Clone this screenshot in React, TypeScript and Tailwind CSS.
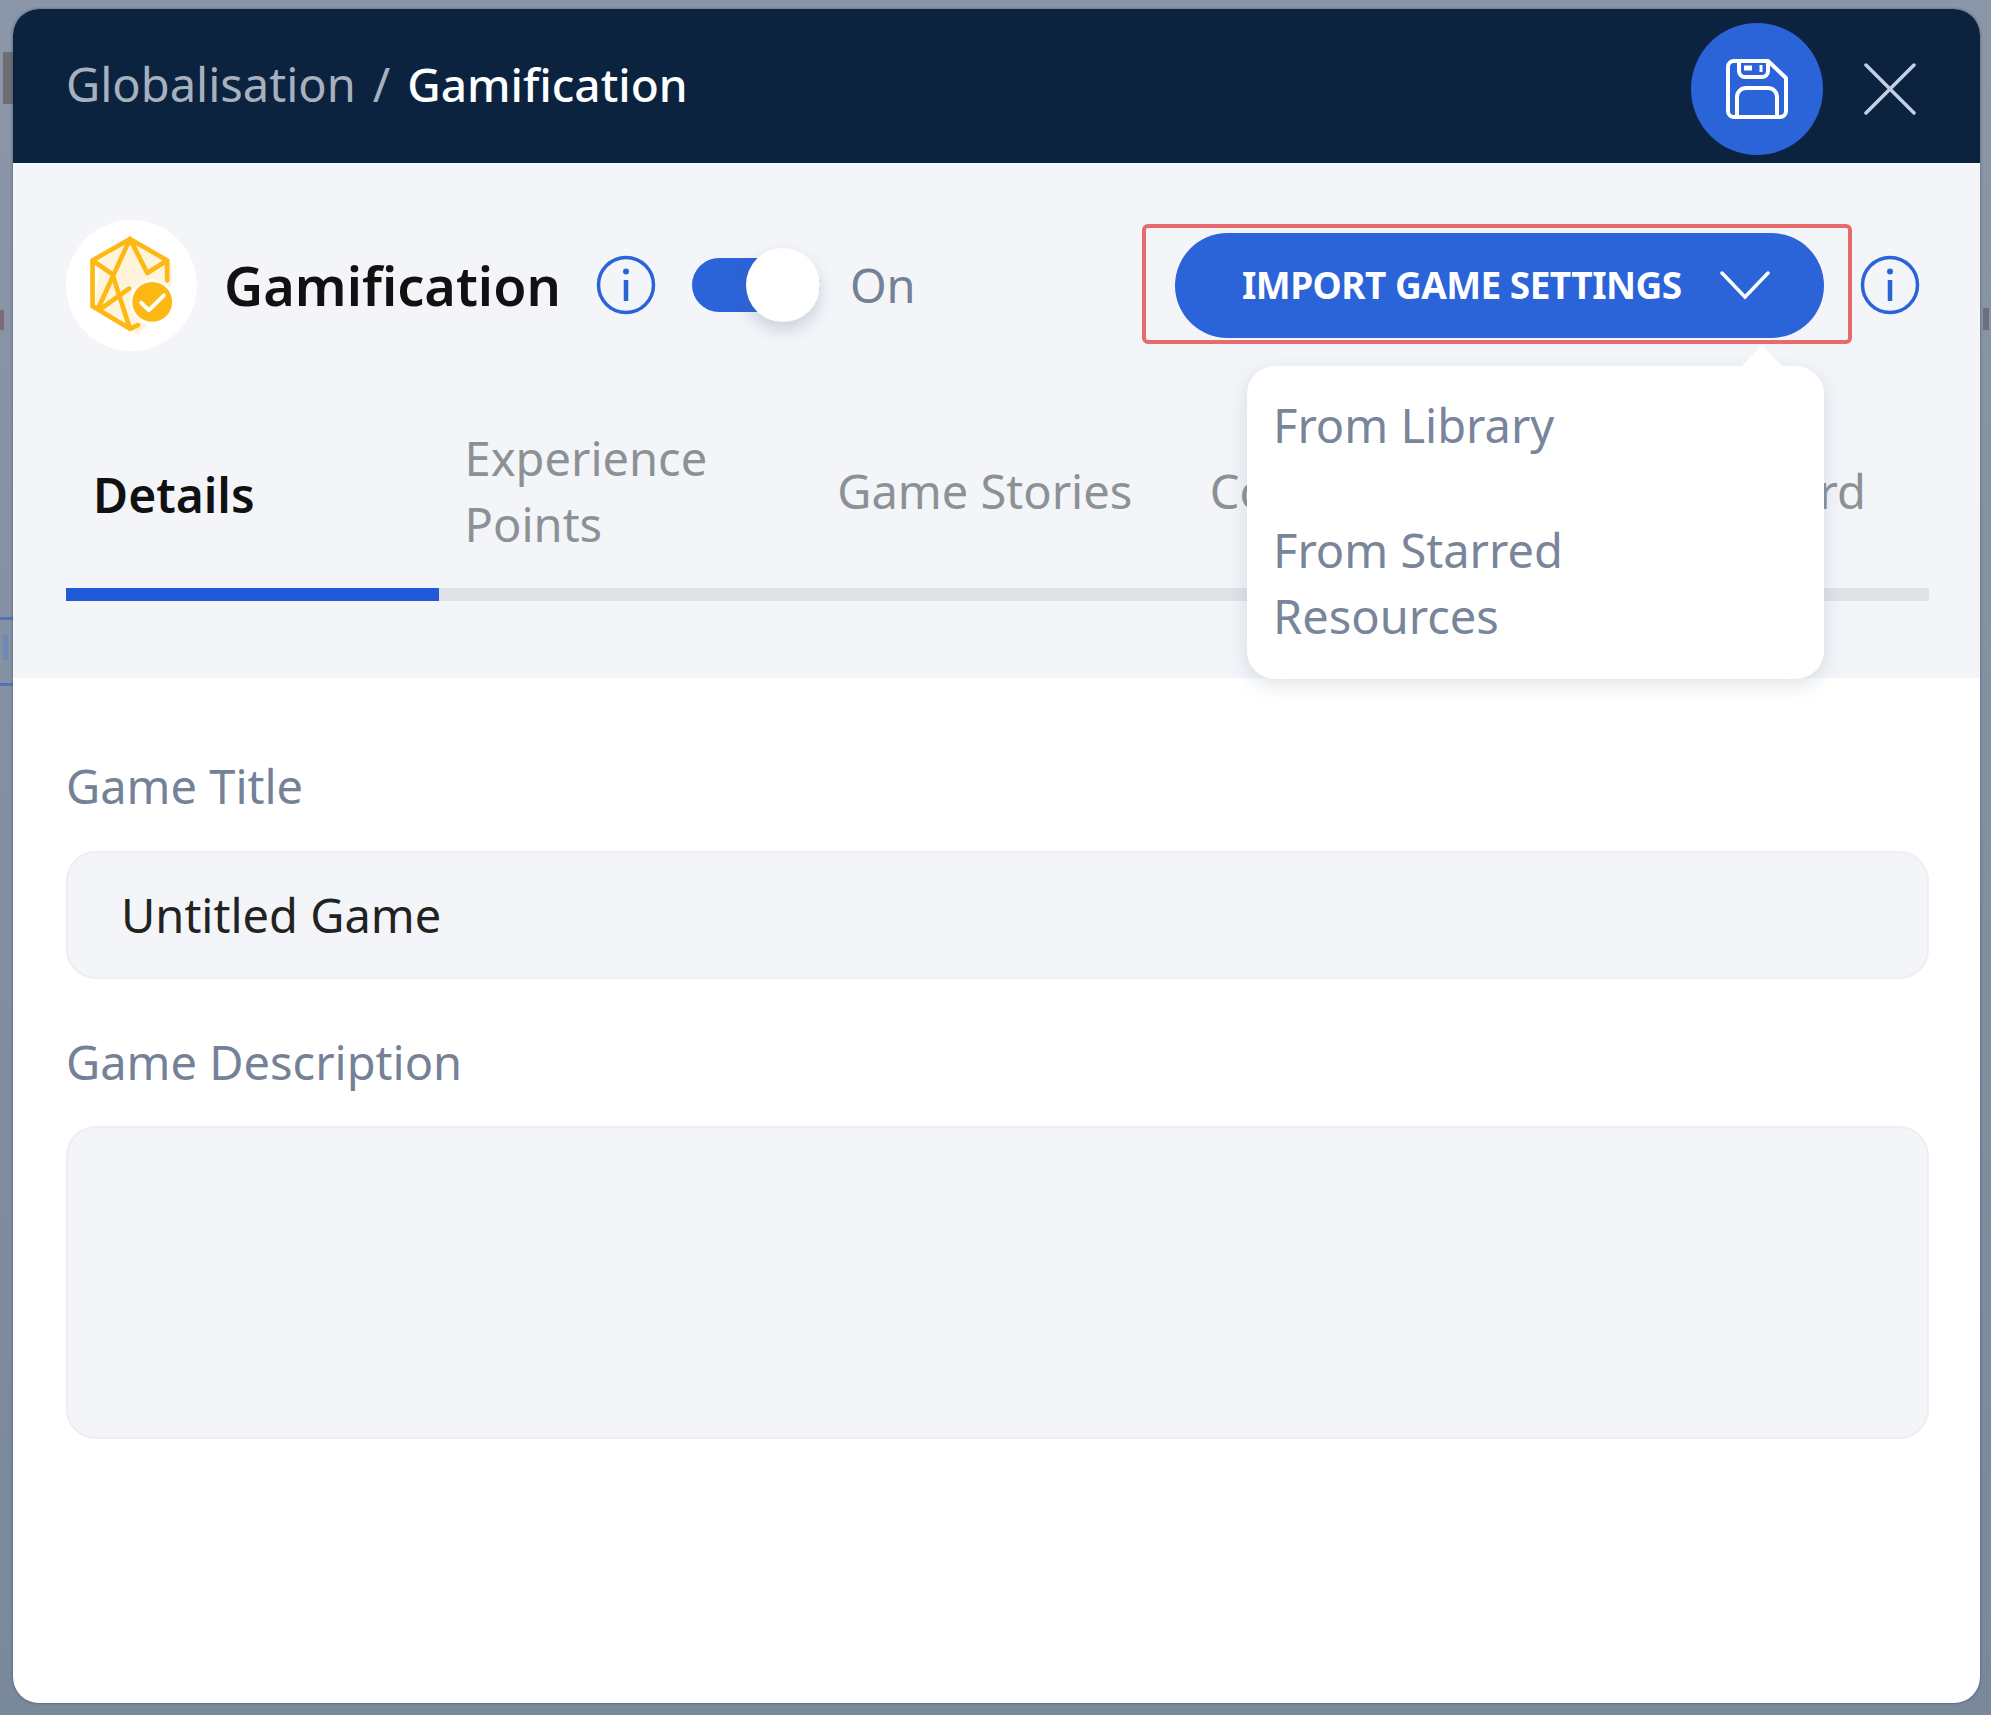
import React from "react";

const Info = () => (
  <svg width="60" height="60" viewBox="0 0 60 60" fill="none" className="shrink-0">
    <circle cx="30" cy="30" r="27.5" stroke="#2b63d9" strokeWidth="3.5" />
    <circle cx="30" cy="16.5" r="3" fill="#2b63d9" />
    <path d="M30 25v21" stroke="#2b63d9" strokeWidth="4.5" />
  </svg>
);

const Logo = () => (
  <svg width="131" height="131" viewBox="45 58 395 395" fill="none">
    <path d="M238 118 L365 190 L365 245 L340 300 L300 360 L262 405 L130 320 L150 180 Z" fill="#fff3dc" />
    <path
      d="M262 375 L238 386 L125 318 V180 L238 115 L350 180 V240 M125 180 L185 222 L238 386 M238 115 L145 318 M238 115 L290 218 L350 180 M155 322 L235 265"
      stroke="#fdb813"
      strokeWidth="14"
      strokeLinejoin="round"
      strokeLinecap="round"
    />
    <circle cx="305" cy="305" r="68" fill="#fff" />
    <circle cx="305" cy="305" r="60" fill="#fdb813" />
    <path d="M272 308 L295 330 L340 285" stroke="#fff" strokeWidth="12" strokeLinecap="round" strokeLinejoin="round" />
  </svg>
);

const Tab = ({ label, active }: { label: string; active?: boolean }) => (
  <div
    className={
      active
        ? "w-1/5 h-[200px] -mb-[13px] pl-[27px] flex items-center border-b-[13px] border-[#2159d8] text-[48px] font-semibold text-[#111111]"
        : "w-1/5 h-[187px] pb-[8px] pl-[26px] flex items-center text-[#8c9196]"
    }
  >
    {label}
  </div>
);

export default function App() {
  return (
    <div className="relative w-[1991px] h-[1715px] overflow-hidden bg-gradient-to-b from-[#8b97a8] to-[#7a889b] pt-[9px] pl-[13px] text-[47px] leading-[66px] font-['Noto_Sans','Open_Sans',sans-serif]">
      <div className="absolute left-[3px] top-[52px] w-[10px] h-[52px] bg-[#6d6d72]" />
      <div className="absolute left-0 top-[310px] w-[4px] h-[20px] bg-[#7b6a78]" />
      <div className="absolute left-0 top-[575px] w-[13px] h-[1px] bg-[#7a90b8]" />
      <div className="absolute left-0 top-[617px] w-[13px] h-[3px] bg-[#4f72b8]" />
      <div className="absolute left-[3px] top-[635px] w-[5px] h-[25px] bg-[#6f88b5]" />
      <div className="absolute left-0 top-[683px] w-[13px] h-[3px] bg-[#4f72b8]" />
      <div className="absolute left-0 top-[729px] w-[13px] h-[1px] bg-[#7a90b8]" />
      <div className="absolute right-[2px] top-[308px] w-[6px] h-[22px] bg-[#6a717c]" />

      <div className="relative flex flex-col w-[1967px] h-[1694px] rounded-[26px] overflow-hidden bg-white shadow-[0_0_3px_rgba(60,75,100,0.8)]">
        <header className="flex items-center h-[154px] shrink-0 bg-[#0c2340] pl-[53px] pr-[64px]">
          <span className="text-[#a6b1bd] mb-[5px]">Globalisation</span>
          <span className="text-[#a6b1bd] ml-[17px] mr-[17px] mb-[5px]">/</span>
          <span className="text-white text-[46px] font-medium mb-[5px]">Gamification</span>
          <button className="ml-auto mt-[5px] flex items-center justify-center w-[132px] h-[132px] rounded-full bg-[#2b63d9]">
            <svg width="62" height="60" viewBox="0 0 62 60" fill="none" stroke="#fff" strokeWidth="4" strokeLinejoin="round">
              <path d="M2 8a6 6 0 0 1 6-6h34l18 17v33a6 6 0 0 1-6 6H8a6 6 0 0 1-6-6V8z" />
              <path d="M13 2v10a6 6 0 0 0 6 6h17a6 6 0 0 0 6-6V2" />
              <path d="M18 9h8" strokeWidth="5" />
              <path d="M35 6v7" strokeWidth="3" />
              <path d="M11 58V38a9 9 0 0 1 9-9h22a9 9 0 0 1 9 9v20" />
            </svg>
          </button>
          <button className="ml-[41px] mt-[5px] flex items-center justify-center w-[52px] h-[52px]">
            <svg width="52" height="52" viewBox="0 0 52 52" stroke="#c3d0e6" strokeWidth="3.5" strokeLinecap="round">
              <path d="M2 2 L50 50 M50 2 L2 50" />
            </svg>
          </button>
        </header>

        <section className="relative h-[515px] shrink-0 bg-[#f3f5f9] pl-[53px] pr-[51px] pt-[57px]">
          <div className="flex items-center h-[130px] pr-[9px]">
            <div className="flex items-center justify-center w-[131px] h-[131px] rounded-full bg-white shrink-0">
              <Logo />
            </div>
            <span className="ml-[27px] text-[54px] font-semibold text-[#111111]">Gamification</span>
            <div className="ml-[35px]"><Info /></div>
            <div className="relative ml-[36px] w-[128px] h-[54px] rounded-full bg-[#2b63d9] shrink-0">
              <div className="absolute right-0 -top-[10px] w-[74px] h-[74px] rounded-full bg-white shadow-[0_8px_16px_rgba(90,105,130,0.25)]" />
            </div>
            <span className="ml-[30px] text-[#748196]">On</span>
            <button className="relative ml-auto flex items-center w-[649px] h-[105px] rounded-full bg-[#2b63d9] pl-[67px] text-white font-bold text-[37px]">
              <span className="tracking-[-0.55px]">IMPORT GAME SETTINGS</span>
              <svg className="ml-[38px]" width="50" height="30" viewBox="0 0 50 30" fill="none" stroke="#fff" strokeWidth="3.5" strokeLinecap="round">
                <path d="M2 3 L25 27 L48 3" />
              </svg>
              <div className="absolute -left-[33px] -right-[28px] -top-[9px] -bottom-[6px] rounded-[6px] border-[4px] border-[#e76a6f]" />
            </button>
            <div className="ml-[36px]"><Info /></div>
          </div>

          <div className="flex mt-[51px] h-[200px] items-end border-b-[13px] border-[#dfe3e8]">
            <Tab label="Details" active />
            <Tab label="Experience Points" />
            <Tab label="Game Stories" />
            <Tab label="Collections" />
            <Tab label="Leaderboard" />
          </div>

          <div className="absolute left-[1234px] top-[203px] w-[577px] h-[313px] rounded-[28px] bg-white pl-[26px] pr-[40px] pt-[26px] text-[#78859a] shadow-[0_6px_20px_rgba(100,115,140,0.2)]">
            <div className="absolute left-[495px] -top-[21px] w-0 h-0 border-x-[20px] border-x-transparent border-b-[21px] border-b-white" />
            <div>From Library</div>
            <div className="mt-[59px]">From Starred Resources</div>
          </div>
        </section>

        <section className="flex flex-col pl-[53px] pr-[51px] pt-[75px]">
          <label className="text-[#748196]">Game Title</label>
          <div className="flex items-center mt-[32px] h-[128px] rounded-[30px] bg-[#f3f5f9] border-2 border-[#eceef2] pl-[53px] text-[#222222]">
            Untitled Game
          </div>
          <label className="mt-[50px] text-[#748196]">Game Description</label>
          <div className="mt-[31px] h-[313px] rounded-[30px] bg-[#f3f5f9] border-2 border-[#eceef2]" />
        </section>
      </div>
    </div>
  );
}
